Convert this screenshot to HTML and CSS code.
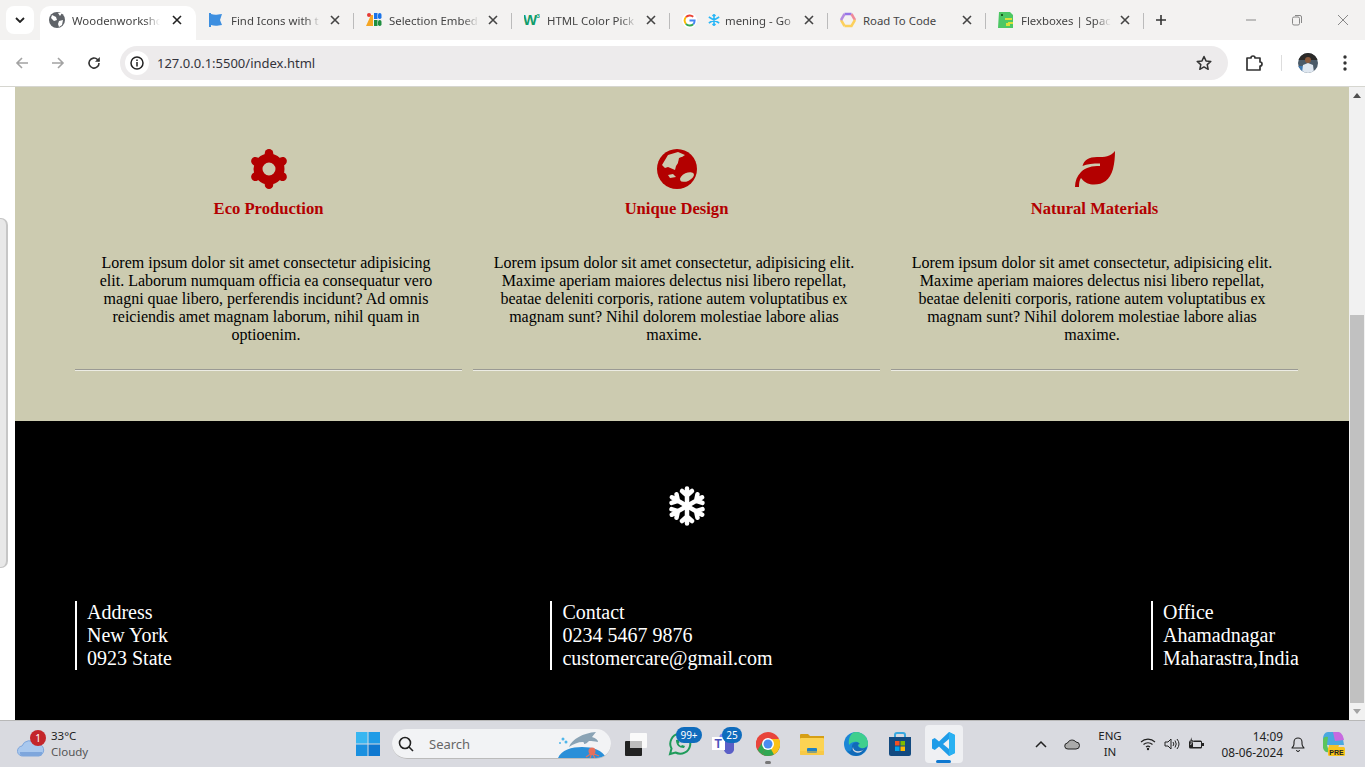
FILE: index.html
```html
<!DOCTYPE html>
<html>

<head>
    <meta charset="UTF-8">
    <title>Woodenworkshop</title>
    <link rel="stylesheet" href="styles.css">
</head>

<body>
    <div class="tabstrip">
        <div class="tab_menu"><svg width="10" height="6" viewBox="0 0 10 6"><path d="M1 1l4 4 4-4" fill="none" stroke="#222" stroke-width="1.8"/></svg></div>
        <div class="tab active">
            <svg class="fav" width="16" height="16" viewBox="0 0 16 16"><circle cx="8" cy="8" r="8" fill="#5f6368"/><path d="M3 3l4 2 1 3-3 1-3-3zM10 9l4-1-1 5-3 2-1-3zM9 1h4l-2 3z" fill="#fff"/></svg>
            <span class="tab_title">Woodenworkshc</span>
            <svg class="tab_close" width="10" height="10" viewBox="0 0 10 10"><path d="M1 1l8 8M9 1l-8 8" stroke="#222" stroke-width="1.6"/></svg>
        </div>
        <div class="tab">
            <svg class="fav" width="16" height="16" viewBox="0 0 16 16"><path d="M1 1h2v1c3 1 5 1 11 0l-2 6 2 5c-5 1-8 1-11 0v2H1z" fill="#3d8fe0"/></svg>
            <span class="tab_title">Find Icons with t</span>
            <svg class="tab_close" width="10" height="10" viewBox="0 0 10 10"><path d="M1 1l8 8M9 1l-8 8" stroke="#444" stroke-width="1.6"/></svg>
        </div>
        <div class="tab">
            <svg class="fav" width="16" height="16" viewBox="0 0 16 16"><path d="M0 14L5 3h2v11z" fill="#f5a623"/><circle cx="3" cy="3" r="2" fill="#e53935"/><rect x="8" y="1" width="3.5" height="6" fill="#1a73e8"/><rect x="12" y="1" width="3.5" height="6" rx="1.7" fill="#1a73e8"/><rect x="8" y="8" width="3.5" height="6" fill="#1e8e3e"/><rect x="12" y="8" width="3.5" height="6" rx="1.7" fill="#1e8e3e"/></svg>
            <span class="tab_title">Selection Embed</span>
            <svg class="tab_close" width="10" height="10" viewBox="0 0 10 10"><path d="M1 1l8 8M9 1l-8 8" stroke="#444" stroke-width="1.6"/></svg>
        </div>
        <div class="tab">
            <svg class="fav" width="16" height="16" viewBox="0 0 16 16"><text x="-1" y="13" font-family="Liberation Sans" font-weight="bold" font-size="15" fill="#0f9d6b">W</text><text x="12.500" y="6" font-family="Liberation Sans" font-weight="bold" font-size="6" fill="#0f9d6b">3</text></svg>
            <span class="tab_title">HTML Color Pick</span>
            <svg class="tab_close" width="10" height="10" viewBox="0 0 10 10"><path d="M1 1l8 8M9 1l-8 8" stroke="#444" stroke-width="1.6"/></svg>
        </div>
        <div class="tab tab_google">
            <svg class="fav" width="16" height="16" viewBox="0 0 16 16"><circle cx="8" cy="8" r="8" fill="#fff"/><path d="M12 4a5.5 5.5 0 0 0-7.800 0.500" fill="none" stroke="#ea4335" stroke-width="2"/><path d="M4.200 4.500a5.500 5.500 0 0 0 0 7" fill="none" stroke="#fbbc05" stroke-width="2"/><path d="M4.200 11.500a5.500 5.500 0 0 0 7.800 0.500" fill="none" stroke="#34a853" stroke-width="2"/><path d="M12 12a5.500 5.500 0 0 0 1.500-4H8" fill="none" stroke="#4285f4" stroke-width="2"/></svg>
            <svg class="fav_snow" width="12" height="12" viewBox="0 0 12 12"><path d="M6 0v12M.8 3l10.400 6M11.200 3L.8 9M4.500 1L6 2.500 7.500 1M4.500 11L6 9.500 7.500 11" fill="none" stroke="#29b6f6" stroke-width="1.500"/></svg>
            <span class="tab_title">mening - Go</span>
            <svg class="tab_close" width="10" height="10" viewBox="0 0 10 10"><path d="M1 1l8 8M9 1l-8 8" stroke="#444" stroke-width="1.6"/></svg>
        </div>
        <div class="tab">
            <svg class="fav" width="16" height="16" viewBox="0 0 16 16"><path d="M4.500 2h7" stroke="#9575e8" stroke-width="2.500"/><path d="M11.500 2L15 8" stroke="#f08a9a" stroke-width="2.500"/><path d="M15 8l-3.500 6h-7" fill="none" stroke="#fcd05c" stroke-width="2.500"/><path d="M4.500 14L1 8" stroke="#fcd05c" stroke-width="2.500"/><path d="M1 8l3.500-6" stroke="#b58be0" stroke-width="2.500"/></svg>
            <span class="tab_title solid">Road To Code</span>
            <svg class="tab_close" width="10" height="10" viewBox="0 0 10 10"><path d="M1 1l8 8M9 1l-8 8" stroke="#444" stroke-width="1.6"/></svg>
        </div>
        <div class="tab">
            <svg class="fav" width="16" height="16" viewBox="0 0 16 16"><path d="M1 0h11l3 3v13H0z" fill="#4cc764"/><rect x="3" y="2" width="2" height="2" fill="#1b5e20"/><path d="M7 6h7v2h-4v2h5v2h-3v2H8v-3h2V8H7z" fill="#d8e23a"/></svg>
            <span class="tab_title">Flexboxes | Spac</span>
            <svg class="tab_close" width="10" height="10" viewBox="0 0 10 10"><path d="M1 1l8 8M9 1l-8 8" stroke="#444" stroke-width="1.6"/></svg>
        </div>
        <div class="tab_new"><svg width="12" height="12" viewBox="0 0 12 12"><path d="M6 1v10M1 6h10" stroke="#333" stroke-width="1.6"/></svg></div>
        <div class="win_controls">
            <svg width="12" height="12" viewBox="0 0 12 12"><path d="M1 6h10" stroke="#888"/></svg>
            <svg width="12" height="12" viewBox="0 0 12 12"><rect x="1.500" y="3" width="7" height="8" rx="1.500" fill="none" stroke="#888"/><path d="M4 1.500h5a1.500 1.500 0 0 1 1.500 1.500v6" fill="none" stroke="#888"/></svg>
            <svg width="12" height="12" viewBox="0 0 12 12"><path d="M1 1l10 10M11 1L1 11" stroke="#888"/></svg>
        </div>
    </div>

    <div class="toolbar">
        <svg class="nav_btn" width="14" height="14" viewBox="0 0 14 14"><path d="M13 7H2M7 2L2 7l5 5" fill="none" stroke="#a3a3a3" stroke-width="1.600"/></svg>
        <svg class="nav_btn" width="14" height="14" viewBox="0 0 14 14"><path d="M1 7h11M7 2l5 5-5 5" fill="none" stroke="#a3a3a3" stroke-width="1.600"/></svg>
        <svg class="nav_btn" width="14" height="14" viewBox="0 0 14 14"><path d="M12 7a5 5 0 1 1-1.500-3.500L12 5" fill="none" stroke="#333" stroke-width="1.600"/><path d="M12.800 1v4.800H8z" fill="#333"/></svg>
        <div class="omnibox">
            <div class="site_info"><svg width="14" height="14" viewBox="0 0 14 14"><circle cx="7" cy="7" r="6" fill="none" stroke="#222" stroke-width="1.500"/><path d="M7 6v4.500M7 3.500v1.500" stroke="#222" stroke-width="1.500"/></svg></div>
            <span class="url">127.0.0.1:5500/index.html</span>
            <svg width="16" height="16" viewBox="0 0 16 16"><path d="M8 1.500l2 4.400 4.800.5-3.600 3.200 1 4.700L8 11.900l-4.200 2.400 1-4.700L1.200 6.400 6 5.900z" fill="none" stroke="#333" stroke-width="1.500" stroke-linejoin="round"/></svg>
        </div>
        <svg class="ext" width="18" height="18" viewBox="0 0 18 18"><path d="M2 4h4a2 2 0 0 1 4 0h5v4a2 2 0 0 1 0 4v4H2z" fill="none" stroke="#333" stroke-width="1.700" stroke-linejoin="round"/></svg>
        <div class="tool_sep"></div>
        <svg class="avatar" width="20" height="20" viewBox="0 0 20 20"><clipPath id="av"><circle cx="10" cy="10" r="10"/></clipPath><g clip-path="url(#av)"><rect width="20" height="20" fill="#4a5a68"/><rect width="20" height="7" fill="#2b2a28"/><rect y="13" width="7" height="7" fill="#3f78b0"/><circle cx="10" cy="7" r="3" fill="#8a5a3c"/><path d="M4 20l1-8 5-2 5 2 1 8z" fill="#dfe7f0"/></g></svg>
        <svg class="kebab" width="4" height="16" viewBox="0 0 4 16"><circle cx="2" cy="2" r="1.700" fill="#333"/><circle cx="2" cy="8" r="1.700" fill="#333"/><circle cx="2" cy="14" r="1.700" fill="#333"/></svg>
    </div>

    <div class="viewport">
        <div class="gutter"><div class="side_handle"></div></div>
        <div class="page">
            <section class="features">
                <div class="feature_row">
                    <div class="feature">
                        <svg class="feature_icon" width="40" height="40" viewBox="0 0 40 40">
                            <circle cx="20" cy="20" r="11" fill="none" stroke="#b30000" stroke-width="9"/>
                            <g stroke="#b30000" stroke-width="8.500" stroke-linecap="round">
                                <path d="M20 4.300v3"/><path d="M20 32.700v3"/>
                                <path d="M6.400 12.200l2.600 1.500"/><path d="M31 26.300l2.600 1.500"/>
                                <path d="M6.400 27.800l2.600-1.500"/><path d="M31 13.700l2.600-1.500"/>
                            </g>
                        </svg>
                        <h3>Eco Production</h3>
                        <p>Lorem ipsum dolor sit amet consectetur adipisicing elit. Laborum numquam officia ea consequatur vero magni quae libero, perferendis incidunt? Ad omnis reiciendis amet magnam laborum, nihil quam in optioenim.</p>
                    </div>
                    <div class="feature">
                        <svg class="feature_icon" width="40" height="40" viewBox="0 0 40 40">
                            <circle cx="20" cy="20" r="20" fill="#b30000"/>
                            <path d="M5 16L11 6l10-3 7 3-3 2-3 1-1 5-2 3-1 4-7-3-3 1z" fill="#cccbb0"/>
                            <path d="M21 14l3-6 2 1-2 6z" fill="#b30000"/>
                            <path d="M11 26l5-1 3 3-6 1z" fill="#cccbb0"/>
                            <ellipse cx="30" cy="28" rx="7.500" ry="4" transform="rotate(-25 30 28)" fill="#cccbb0"/>
                        </svg>
                        <h3>Unique Design</h3>
                        <p>Lorem ipsum dolor sit amet consectetur, adipisicing elit. Maxime aperiam maiores delectus nisi libero repellat, beatae deleniti corporis, ratione autem voluptatibus ex magnam sunt? Nihil dolorem molestiae labore alias maxime.</p>
                    </div>
                    <div class="feature">
                        <svg class="feature_icon" width="40" height="40" viewBox="0 -2 40 40">
                            <path d="M40 0C35 6 30 6 22 6C14 6 9 9 7.500 15C12 13 18 12.500 25 12.500L25 15C17 15 11 16 6 21C2 25 0 30 0 36L4 36C4 32 4.500 29 6 27C10 32 14 33.500 19 33.500C28 33.500 35 29 38 18C39.500 12 40 6 40 0Z" fill="#b30000"/>
                        </svg>
                        <h3>Natural Materials</h3>
                        <p>Lorem ipsum dolor sit amet consectetur, adipisicing elit. Maxime aperiam maiores delectus nisi libero repellat, beatae deleniti corporis, ratione autem voluptatibus ex magnam sunt? Nihil dolorem molestiae labore alias maxime.</p>
                    </div>
                </div>
            </section>
            <footer class="footer">
                <svg class="footer_logo" width="40" height="40" viewBox="0 0 40 40">
                    <defs>
                        <g id="arm"><path d="M20 20V2.500M20 9.500l-5-4.500M20 9.500l5-4.500" fill="none" stroke="#fff" stroke-width="4.500" stroke-linecap="round"/></g>
                    </defs>
                    <use href="#arm"/>
                    <use href="#arm" transform="rotate(60 20 20)"/>
                    <use href="#arm" transform="rotate(120 20 20)"/>
                    <use href="#arm" transform="rotate(180 20 20)"/>
                    <use href="#arm" transform="rotate(240 20 20)"/>
                    <use href="#arm" transform="rotate(300 20 20)"/>
                </svg>
                <div class="footer_cols">
                    <div class="footer_col">Address<br>New York<br>0923 State</div>
                    <div class="footer_col">Contact<br>0234 5467 9876<br>customercare@gmail.com</div>
                    <div class="footer_col">Office<br>Ahamadnagar<br>Maharastra,India</div>
                </div>
            </footer>
        </div>
        <div class="scrollbar">
            <svg width="8" height="5" viewBox="0 0 8 5"><path d="M4 0l4 5H0z" fill="#505050"/></svg>
            <div class="scroll_thumb"></div>
            <svg width="8" height="5" viewBox="0 0 8 5"><path d="M0 0h8L4 5z" fill="#a3a3a3"/></svg>
        </div>
    </div>

    <div class="taskbar">
        <div class="weather">
            <div class="weather_icon">
                <svg width="28" height="20" viewBox="0 0 28 20"><path d="M6 19a5 5 0 0 1-1-10 8 8 0 0 1 14-2 6 6 0 0 1 3 12z" fill="#a9c8ee" stroke="#7ea6dc"/><path d="M3 15h22v2a2 2 0 0 1-2 2H6a3 3 0 0 1-3-4z" fill="#7ea6dc"/></svg>
                <span class="weather_badge">1</span>
            </div>
            <div class="weather_text"><span>33°C</span><span class="muted">Cloudy</span></div>
        </div>
        <div class="slot">
            <svg width="24" height="24" viewBox="0 0 24 24"><rect width="11.500" height="11.500" fill="#38b6f1"/><rect x="12.500" width="11.500" height="11.500" fill="#1f9be6"/><rect y="12.500" width="11.500" height="11.500" fill="#1a90e0"/><rect x="12.500" y="12.500" width="11.500" height="11.500" fill="#0f78d0"/></svg>
        </div>
        <div class="search">
            <svg width="16" height="16" viewBox="0 0 16 16"><circle cx="7" cy="7" r="5.500" fill="none" stroke="#222" stroke-width="1.600"/><path d="M11 11l4 4" stroke="#222" stroke-width="1.600"/></svg>
            <span class="search_text">Search</span>
            <svg width="50" height="28" viewBox="0 0 50 28"><path d="M1 28c3-8 14-11 24-11s21 3 24 11z" fill="#2a8fd8"/><path d="M12 17c3-8 14-14 27-15l-4 5c4 1 6 3 6 5-4-1-6-1-9-1-2 2-3 3-5 3 0-1 0-2-1-2-5 0-10 2-14 5z" fill="#8aa3b5"/><circle cx="35" cy="21" r="3.500" fill="#e8705a"/><path d="M35 23l-6 4M35 23l-2 5M35 23l3 5M35 23l7 3" stroke="#e8705a" stroke-width="1.200"/><circle cx="6" cy="9" r="1.500" fill="#4fb6ea"/><circle cx="3" cy="13" r="1" fill="#4fb6ea"/><circle cx="9" cy="12" r="1.500" fill="#4fb6ea"/></svg>
        </div>
        <div class="slot">
            <svg width="24" height="24" viewBox="0 0 24 24"><rect x="6" y="1" width="17" height="15" rx="1" fill="#fafafa"/><rect x="1" y="9" width="17" height="15" rx="1" fill="#222"/><rect x="6" y="9" width="12" height="7" fill="#bdbdbd"/></svg>
        </div>
        <div class="slot">
            <svg width="24" height="24" viewBox="0 0 24 24"><path d="M2 22l1.500-5.500A10 10 0 1 1 7.500 20.500z" fill="none" stroke="#1e9b5a" stroke-width="2"/><path d="M8 8c0 5 3 8 8 8l1-2-3-1-1 1c-1-.5-2-1.500-2.500-2.500l1-1-1-3z" fill="#1e9b5a"/></svg>
            <span class="count_badge">99+</span>
        </div>
        <div class="slot">
            <svg width="26" height="26" viewBox="0 0 26 26"><circle cx="19" cy="8" r="3" fill="#7b83eb"/><path d="M12 10h11v7a5 5 0 0 1-10 2z" fill="#5b5fc7"/><circle cx="12" cy="6" r="3.500" fill="#7b83eb"/><rect x="1" y="6" width="13" height="13" fill="#fff"/><text x="3.500" y="17" font-family="Liberation Sans" font-weight="bold" font-size="12" fill="#4b53bc">T</text></svg>
            <span class="count_badge small">25</span>
        </div>
        <div class="slot">
            <svg width="24" height="24" viewBox="0 0 24 24"><circle cx="12" cy="12" r="12" fill="#e8453c"/><path d="M12 12L1.600 18A12 12 0 0 1 2.500 4.700z" fill="#e8453c"/><path d="M12 12l-6 10.400A12 12 0 0 1 1.600 18L7 9z" fill="#31a853"/><path d="M12 24A12 12 0 0 0 24 12H12l-6 10.400A12 12 0 0 0 12 24z" fill="#31a853"/><path d="M12 7h11a12 12 0 0 1-5 15.500L12 12z" fill="#fbc116"/><circle cx="12" cy="12" r="6" fill="#fff"/><circle cx="12" cy="12" r="4.500" fill="#4a8cf0"/></svg>
            <span class="running_dot"></span>
        </div>
        <div class="slot">
            <svg width="24" height="22" viewBox="0 0 24 22"><path d="M0 2a1 1 0 0 1 1-1h7l2 2h14v4H0z" fill="#d69f16"/><rect y="5" width="24" height="17" rx="1" fill="#fcd353"/><rect x="7" y="15" width="10" height="5" rx="1" fill="#1d80c4"/><rect y="18" width="24" height="4" fill="#f4bf3a" opacity=".5"/></svg>
        </div>
        <div class="slot">
            <svg width="24" height="24" viewBox="0 0 24 24"><circle cx="12" cy="12" r="12" fill="#1b86d6"/><path d="M12 0a12 12 0 0 1 12 12c0 3-3 5-7 4-3-1-3-3-2-5-2-2-7-2-10 2C4 6 7 0 12 0z" fill="#3fcf8e"/><path d="M8 14c0-4 6-5 8-2-3 0-3 3 0 4 3 1 5 0 7-2-1 6-6 10-11 10-4 0-8-3-9-6 1 2 5 3 5-4z" fill="#0c59a4" opacity=".6"/><path d="M9 15c0 3 3 5 7 4 2 0 3-1 4-2-2 3-6 5-9 3-2-1-3-3-2-5z" fill="#d9dae0"/></svg>
        </div>
        <div class="slot">
            <svg width="24" height="26" viewBox="0 0 24 26"><path d="M7 7V4a2 2 0 0 1 2-2h6a2 2 0 0 1 2 2v3" fill="none" stroke="#38a8e0" stroke-width="2"/><path d="M1 6h22v17a2 2 0 0 1-2 2H3a2 2 0 0 1-2-2z" fill="#134a80"/><rect x="7" y="10" width="4.500" height="4.500" fill="#f25022"/><rect x="12.500" y="10" width="4.500" height="4.500" fill="#7fba00"/><rect x="7" y="15.500" width="4.500" height="4.500" fill="#00a4ef"/><rect x="12.500" y="15.500" width="4.500" height="4.500" fill="#ffb900"/></svg>
        </div>
        <div class="slot slot_active">
            <svg width="24" height="24" viewBox="0 0 24 24"><path d="M17 0l6 3v18l-6 3L7 14.500 2.800 18 0 16.500V7.500L2.800 6 7 9.500zM17 7l-6 5 6 5z" fill="#1f9ce8"/><path d="M17 0l6 3v18l-6 3z" fill="#2ab1f2"/></svg>
            <span class="active_bar"></span>
        </div>
        <div class="tray">
            <svg class="tray_item" width="12" height="8" viewBox="0 0 12 8"><path d="M1 7l5-5 5 5" fill="none" stroke="#222" stroke-width="1.500"/></svg>
            <svg class="tray_item" width="16" height="12" viewBox="0 0 16 12"><path d="M4 11a3 3 0 0 1-.5-6A5 5 0 0 1 12 4a3.500 3.500 0 0 1 0 7z" fill="#aaa" stroke="#222"/></svg>
            <div class="lang">ENG<br>IN</div>
            <svg class="tray_icon" width="16" height="14" viewBox="0 0 16 14"><path d="M1 5a10 10 0 0 1 14 0M3.500 7.500a6.500 6.500 0 0 1 9 0M6 10a3 3 0 0 1 4 0" fill="none" stroke="#222" stroke-width="1.100"/><circle cx="8" cy="12" r="1.200" fill="#222"/></svg>
            <svg class="tray_icon" width="16" height="14" viewBox="0 0 16 14"><path d="M1 5h3l3-3v10L4 9H1z" fill="none" stroke="#222"/><path d="M9 5a3 3 0 0 1 0 4M11 3.500a6 6 0 0 1 0 7M13 2a8 8 0 0 1 0 10" fill="none" stroke="#222"/></svg>
            <svg class="tray_icon" width="16" height="14" viewBox="0 0 16 14"><rect x="1" y="3.500" width="13" height="8" rx="1.500" fill="#222"/><rect x="14" y="6" width="2" height="3" fill="#222"/><rect x="5" y="5" width="8" height="5" fill="#d9dae0"/><path d="M4 0L1.500 4h2L2.500 8 6 3H4z" fill="#222" stroke="#d9dae0" stroke-width=".5"/></svg>
            <div class="clock">14:09<br>08-06-2024</div>
            <svg class="tray_bell" width="14" height="16" viewBox="0 0 14 16"><path d="M1 12c1-1 2-2 2-4V6a4 4 0 0 1 8 0v2c0 2 1 3 2 4z" fill="none" stroke="#222" stroke-width="1.100" stroke-linejoin="round"/><path d="M5.500 14a1.500 1.500 0 0 0 3 0" fill="none" stroke="#222"/></svg>
            <svg class="copilot" width="24" height="24" viewBox="0 0 24 24"><path d="M7 0h9c3 0 5 3 6 7l1 6H4L2 7c0-4 2-7 5-7z" fill="#4aa8e0"/><path d="M12 0h5c3 0 5 3 6 8l-9 1z" fill="#c76ae0"/><path d="M2 8c0-3 3-4 5-3l-1 8 2 7c-3 1-5-1-6-4z" fill="#5cc45c"/><path d="M8 13h10l-2 7H7z" fill="#f2c230"/><rect x="7" y="15" width="17" height="9" rx="1.500" fill="#f8c51c"/><text x="15.500" y="22.500" text-anchor="middle" font-family="Liberation Sans" font-weight="bold" font-size="7" fill="#222">PRE</text></svg>
        </div>
    </div>
</body>

</html>
```

FILE: styles.css
```css
* {
    margin: 0;
    padding: 0;
    box-sizing: border-box;
}

html,
body {
    width: 100%;
    height: 100%;
    overflow: hidden;
}

body {
    display: flex;
    flex-direction: column;
    font-family: "Noto Sans", sans-serif;
    background-color: #fff;
}

svg {
    display: block;
    flex-shrink: 0;
}

/* browser chrome */
.tabstrip {
    height: 40px;
    display: flex;
    background-color: #f3f2f1;
    padding-left: 6px;
}

.tab_menu {
    width: 28px;
    height: 28px;
    margin-top: 6px;
    margin-right: 6px;
    border-radius: 8px;
    background-color: #fff;
    display: flex;
    align-items: center;
    justify-content: center;
}

.tab {
    width: 158px;
    height: 34px;
    margin-top: 6px;
    padding: 0 0 6px 12px;
    display: flex;
    align-items: center;
    position: relative;
    font-size: 11.4px;
    color: #444;
}

.tab::after {
    content: "";
    position: absolute;
    right: 0;
    top: 7px;
    width: 1px;
    height: 16px;
    background-color: #bbb;
}

.tab.active {
    width: 156px;
    padding-left: 9px;
    background-color: #fff;
    border-radius: 10px 10px 0 0;
}

.tab.active::after {
    display: none;
}

.tab.active .tab_title {
    width: 88px;
    margin-left: 7px;
}

.tab.active .tab_close {
    margin-left: 12px;
}

.tab_title {
    width: 90px;
    margin-left: 7px;
    white-space: nowrap;
    -webkit-mask-image: linear-gradient(to right, #000 82%, transparent);
    mask-image: linear-gradient(to right, #000 82%, transparent);
}

.tab_title.solid {
    -webkit-mask-image: none;
    mask-image: none;
}

.tab_close {
    margin-left: 9px;
}

.tab_google .fav {
    width: 15px;
    height: 15px;
}

.fav_snow {
    margin-left: 11px;
}

.tab_google .tab_title {
    width: 72px;
    margin-left: 5px;
}

.tab_google .tab_close {
    margin-left: 7px;
}

.tab_new {
    width: 34px;
    display: flex;
    align-items: center;
    justify-content: center;
}

.win_controls {
    margin-left: auto;
    width: 120px;
    display: flex;
    align-items: center;
    gap: 34px;
}

.toolbar {
    height: 47px;
    display: flex;
    align-items: center;
    padding: 0 14px 1px 15px;
    border-bottom: 1px solid #d6d6d0;
    background-color: #fff;
}

.nav_btn {
    margin-right: 22px;
}

.omnibox {
    width: 1108px;
    height: 34px;
    margin-left: -3px;
    padding: 0 16px 0 5px;
    border-radius: 17px;
    background-color: #edebec;
    display: flex;
    align-items: center;
}

.site_info {
    width: 24px;
    height: 24px;
    border-radius: 12px;
    background-color: #fff;
    display: flex;
    align-items: center;
    justify-content: center;
}

.url {
    flex: 1;
    margin-left: 8px;
    font-size: 13px;
    color: #33333b;
}

.ext {
    margin-left: 17px;
}

.tool_sep {
    width: 1px;
    height: 16px;
    margin-left: 18px;
    background-color: #ddd;
}

.avatar {
    margin-left: 16px;
}

.kebab {
    margin-left: 25px;
}

/* page */
.viewport {
    flex: 1;
    display: flex;
    min-height: 0;
}

.gutter {
    width: 15px;
    background-color: #fff;
}

.side_handle {
    width: 8px;
    height: 350px;
    margin-top: 131px;
    background-color: #e8e8e8;
    border: solid #c6c6c6;
    border-width: 1px 2px 1px 0;
    border-radius: 0 7px 7px 0;
}

.page {
    flex: 1;
    display: flex;
    flex-direction: column;
    font-family: "Liberation Serif", serif;
}

.features {
    height: 334px;
    padding: 62px 51px 0 60px;
    background-color: #cccbb0;
}

.feature_row {
    display: grid;
    grid-template-columns: 387px 407px 407px;
    gap: 11px;
}

.feature {
    height: 221px;
    text-align: center;
    border-bottom: 1px solid #9a9a94;
    box-shadow: 0 1px 0 #ecece4;
}

.feature_icon {
    margin: 0 auto;
}

.feature h3 {
    margin-top: 11px;
    font-size: 16.6px;
    line-height: 18px;
    color: #b30000;
}

.feature p {
    margin-top: 36px;
    padding: 0 20px 0 15px;
    font-size: 16px;
    line-height: 18px;
    color: #000;
}

.footer {
    flex: 1;
    padding: 65px 50px 0 60px;
    background-color: #000;
    color: #fff;
}

.footer_logo {
    margin: 0 auto;
}

.footer_cols {
    margin-top: 75px;
    display: flex;
    justify-content: space-between;
}

.footer_col {
    padding-left: 10px;
    border-left: 2px solid #fff;
    font-size: 20px;
    line-height: 23px;
}

.scrollbar {
    width: 16px;
    background-color: #f1f1f1;
    display: flex;
    flex-direction: column;
    align-items: center;
    padding-top: 6px;
}

.scroll_thumb {
    width: 14px;
    height: 388px;
    margin-top: 217px;
    margin-bottom: 6px;
    background-color: #c1c1c1;
}

/* windows taskbar */
.taskbar {
    height: 47px;
    display: flex;
    align-items: center;
    border-top: 1px solid #b8b8b8;
    background-color: #d9dae0;
    color: #222;
    font-size: 11.5px;
}

.weather {
    width: 346px;
    padding-left: 17px;
    display: flex;
    align-items: center;
}

.weather_icon {
    width: 34px;
    position: relative;
    padding-top: 6px;
}

.weather_badge {
    position: absolute;
    left: 13px;
    top: -1px;
    width: 16px;
    height: 16px;
    border-radius: 8px;
    background-color: #c4262b;
    color: #fff;
    font-size: 10px;
    line-height: 16px;
    text-align: center;
}

.weather_text {
    display: flex;
    flex-direction: column;
    line-height: 16px;
}

.muted {
    color: #555;
}

.slot {
    width: 44px;
    height: 38px;
    display: flex;
    align-items: center;
    justify-content: center;
    position: relative;
}

.search {
    width: 219px;
    height: 30px;
    margin: 0 3px 0 2px;
    padding: 0 4px 0 6px;
    border-radius: 15px;
    background-color: #f2f3f5;
    border-bottom: 1px solid #bbb;
    display: flex;
    align-items: center;
    font-size: 13px;
    color: #666;
    overflow: hidden;
}

.search_text {
    flex: 1;
    margin-left: 15px;
}

.count_badge {
    position: absolute;
    left: 18px;
    top: 2px;
    width: 26px;
    height: 16px;
    border-radius: 8px;
    background-color: #0f6cbd;
    color: #fff;
    font-size: 10px;
    line-height: 16px;
    text-align: center;
}

.count_badge.small {
    left: 20px;
    width: 20px;
}

.running_dot {
    position: absolute;
    left: 19px;
    bottom: -1px;
    width: 6px;
    height: 3px;
    border-radius: 2px;
    background-color: #777;
}

.slot_active {
    width: 38px;
    margin: 0 3px;
    border-radius: 4px;
    background-color: #eff0f3;
}

.active_bar {
    position: absolute;
    left: 11px;
    bottom: 0;
    width: 15px;
    height: 3px;
    border-radius: 2px;
    background-color: #0f78d0;
}

.tray {
    margin-left: auto;
    padding-right: 17px;
    display: flex;
    align-items: center;
}

.tray_item {
    margin-left: 10px;
    margin-right: 5px;
}

.tray_item + .tray_item {
    margin-left: 12px;
    margin-right: 8px;
}

.lang {
    width: 40px;
    margin: 0 6px 0 2px;
    text-align: center;
    line-height: 16px;
}

.tray_icon {
    margin: 0 4px;
}

.clock {
    width: 75px;
    font-size: 11.8px;
    text-align: right;
    line-height: 16px;
}

.tray_bell {
    margin: 0 5px 0 8px;
}

.copilot {
    margin-left: 11px;
    margin-right: 3px;
}
```
